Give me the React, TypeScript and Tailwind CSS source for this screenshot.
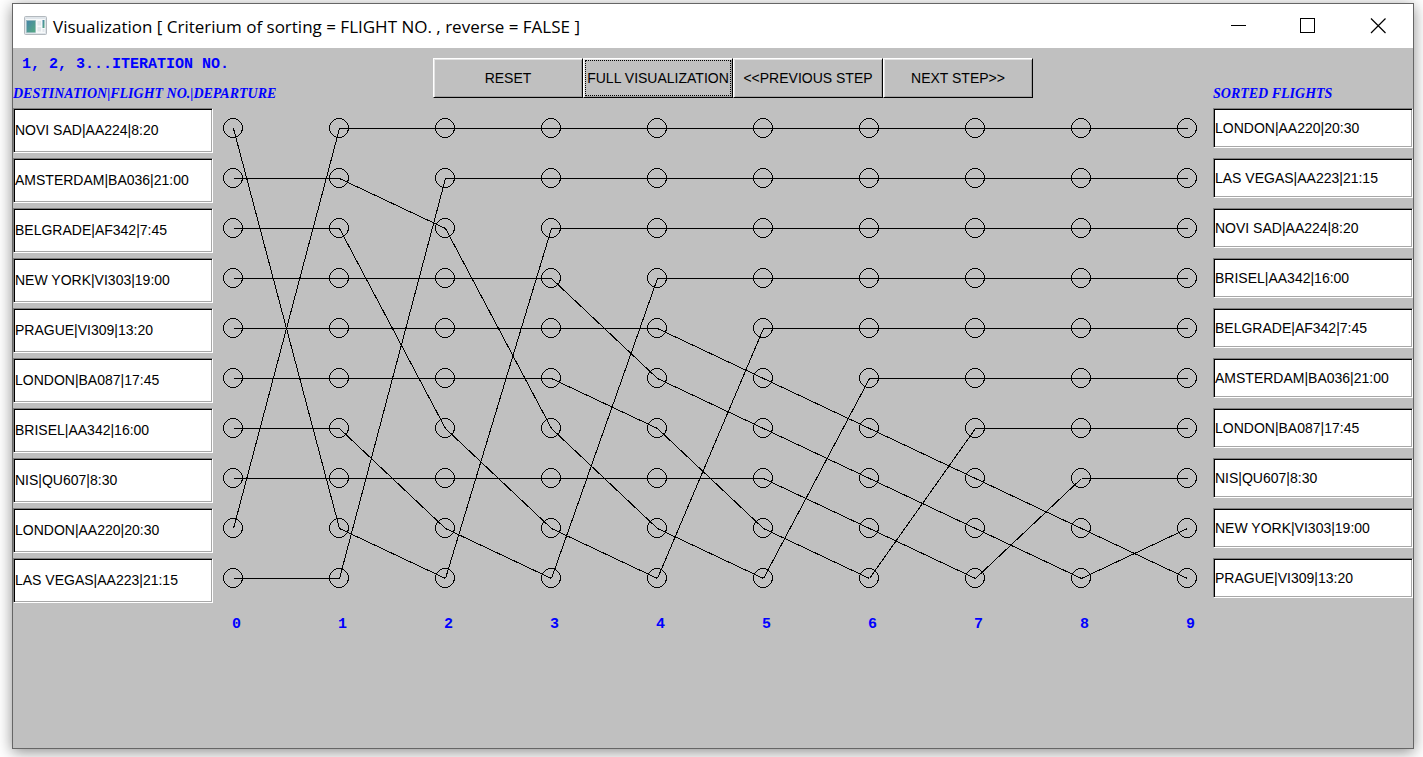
import React from "react";

const UNSORTED = [
  "NOVI SAD|AA224|8:20",
  "AMSTERDAM|BA036|21:00",
  "BELGRADE|AF342|7:45",
  "NEW YORK|VI303|19:00",
  "PRAGUE|VI309|13:20",
  "LONDON|BA087|17:45",
  "BRISEL|AA342|16:00",
  "NIS|QU607|8:30",
  "LONDON|AA220|20:30",
  "LAS VEGAS|AA223|21:15",
];

const SORTED = [
  "LONDON|AA220|20:30",
  "LAS VEGAS|AA223|21:15",
  "NOVI SAD|AA224|8:20",
  "BRISEL|AA342|16:00",
  "BELGRADE|AF342|7:45",
  "AMSTERDAM|BA036|21:00",
  "LONDON|BA087|17:45",
  "NIS|QU607|8:30",
  "NEW YORK|VI303|19:00",
  "PRAGUE|VI309|13:20",
];

// STEPS[i][row] is the row a flight moves to between iteration i and i + 1.
const STEPS = [
  [8, 1, 2, 3, 4, 5, 6, 7, 0, 9],
  [0, 2, 6, 3, 4, 5, 8, 7, 9, 1],
  [0, 1, 6, 3, 4, 5, 8, 7, 9, 2],
  [0, 1, 2, 5, 4, 6, 8, 7, 9, 3],
  [0, 1, 2, 3, 5, 6, 8, 7, 9, 4],
  [0, 1, 2, 3, 4, 6, 7, 8, 9, 5],
  [0, 1, 2, 3, 4, 5, 7, 8, 9, 6],
  [0, 1, 2, 3, 4, 5, 6, 8, 9, 7],
  [0, 1, 2, 3, 4, 5, 6, 7, 9, 8],
];

const INDEXES = Array.from({ length: 10 }, (_, i) => i);
const colX = (c: number) => 20 + 106 * c;
const rowY = (r: number) => 20 + 50 * r;

function AppIcon() {
  return (
    <svg className="h-5 w-6" viewBox="0 0 24 20" aria-hidden="true">
      <defs>
        <linearGradient id="pane" x1="0" y1="0" x2="1" y2="1">
          <stop offset="0" stopColor="#4583a8" />
          <stop offset="1" stopColor="#55ab80" />
        </linearGradient>
      </defs>
      <rect x="0.5" y="0.5" width="22" height="18" rx="1" fill="#dfe5ea" stroke="#b3b9be" />
      <rect x="2" y="3" width="19" height="14" fill="#f7f9fa" />
      <rect x="2.5" y="4.5" width="9" height="12" fill="url(#pane)" stroke="#8fb4b8" strokeWidth="0.6" />
      <path d="M13.5 5h3.5v4.5h-3.5zM13.5 11h3.5v4.5h-3.5z" fill="#e3e8ec" />
      <rect x="18.5" y="4" width="2" height="8" fill="url(#pane)" />
      <rect x="18.5" y="13" width="2" height="3" fill="#e3e8ec" />
    </svg>
  );
}

function TitleBar() {
  const control = "flex h-11 w-[70px] items-center justify-center";
  return (
    <header className="flex h-11 items-center bg-white pl-[11px]">
      <AppIcon />
      <h1 className="ml-[5px] flex-1 pt-[2px] font-['Open_Sans',sans-serif] text-[17px] leading-6 whitespace-nowrap text-black">
        Visualization [ Criterium of sorting = FLIGHT NO. , reverse = FALSE ]
      </h1>
      <button type="button" aria-label="Minimize" className={control}>
        <svg className="size-4" viewBox="0 0 16 16" stroke="#000" shapeRendering="crispEdges">
          <path d="M1 7.5H16" />
        </svg>
      </button>
      <button type="button" aria-label="Maximize" className={control}>
        <svg className="size-4" viewBox="0 0 16 16" stroke="#000" fill="none" shapeRendering="crispEdges">
          <rect x="0.5" y="0.5" width="14" height="14" />
        </svg>
      </button>
      <button type="button" aria-label="Close" className={control}>
        <svg className="size-4" viewBox="0 0 16 16" stroke="#000" strokeWidth="1.2">
          <path d="M1 0.5L15.5 15M15.5 0.5L1 15" />
        </svg>
      </button>
    </header>
  );
}

function StepButton({ children, focused }: { children: string; focused?: boolean }) {
  return (
    <button
      type="button"
      className="h-10 w-[150px] border border-t-white border-r-black border-b-black border-l-white whitespace-nowrap shadow-[inset_1px_1px_0_#e3e3e3,inset_-1px_-1px_0_#a0a0a0]"
    >
      <span
        className={
          focused
            ? "m-px flex h-9 items-center justify-center border border-dotted border-black"
            : "m-px flex h-9 items-center justify-center"
        }
      >
        {children}
      </span>
    </button>
  );
}

function FlightField({ label, value, size }: { label: string; value: string; size: string }) {
  return (
    <input
      readOnly
      aria-label={label}
      value={value}
      className={
        size +
        " block w-full border border-t-[#808080] border-r-white border-b-white border-l-[#808080] bg-white pl-px text-sm text-black shadow-[inset_1px_1px_0_#000,inset_-1px_-1px_0_#a8a8a8] outline-none"
      }
    />
  );
}

function SortChart() {
  return (
    <svg className="h-auto w-full" viewBox="0 0 1000 540" role="img" aria-label="Flight order by iteration">
      <g stroke="#000" fill="none" shapeRendering="crispEdges">
        {STEPS.map((step, c) =>
          step.map((to, from) => (
            <line
              key={c + "-" + from}
              x1={colX(c) + 0.5}
              y1={rowY(from) + 0.5}
              x2={colX(c + 1) + 0.5}
              y2={rowY(to) + 0.5}
            />
          )),
        )}
        {INDEXES.map((c) =>
          INDEXES.map((r) => <circle key={c + "-" + r} cx={colX(c)} cy={rowY(r)} r="9.5" />),
        )}
      </g>
      <g className="fill-[#0000ff] font-['Liberation_Mono',monospace] text-[15px] font-bold">
        {INDEXES.map((c) => (
          <text key={c} x={colX(c) - 1} y="520">
            {c}
          </text>
        ))}
      </g>
    </svg>
  );
}

export default function App() {
  const caption =
    "whitespace-nowrap font-['Liberation_Serif',serif] text-sm leading-[18px] font-bold italic text-[#0000ff]";
  return (
    <div className="flex min-h-screen bg-white pt-[3px] pr-[9px] pb-2 pl-3">
      <div className="flex flex-1 flex-col border border-[#666] bg-[#c0c0c0] font-['Liberation_Sans',sans-serif] text-sm text-black shadow-[0_3px_14px_rgba(0,0,0,0.45)]">
        <TitleBar />
        <main className="flex-1">
          <div className="flex h-[60px]">
            <div className="w-[420px] pt-2">
              <p className="pl-[9px] font-['Liberation_Mono',monospace] text-[15px] leading-[18px] font-bold whitespace-nowrap text-[#0000ff]">
                1, 2, 3...ITERATION NO.
              </p>
              <h2 className={"mt-[11px] " + caption}>DESTINATION|FLIGHT NO.|DEPARTURE</h2>
            </div>
            <div className="flex pt-[10px]">
              <StepButton>RESET</StepButton>
              <StepButton focused>FULL VISUALIZATION</StepButton>
              <StepButton>{"<<PREVIOUS STEP"}</StepButton>
              <StepButton>{"NEXT STEP>>"}</StepButton>
            </div>
            <div className="ml-auto w-[200px] pt-[37px]">
              <h2 className={caption}>SORTED FLIGHTS</h2>
            </div>
          </div>
          <div className="flex items-start">
            <div className="flex w-[200px] flex-col gap-[5px]">
              {UNSORTED.map((f, i) => (
                <FlightField key={f} label={"Flight " + (i + 1)} value={f} size="h-[45px] pb-[2px]" />
              ))}
            </div>
            <div className="min-w-0 flex-1">
              <SortChart />
            </div>
            <div className="flex w-[200px] flex-col gap-[10px]">
              {SORTED.map((f, i) => (
                <FlightField key={f} label={"Sorted flight " + (i + 1)} value={f} size="h-10" />
              ))}
            </div>
          </div>
        </main>
      </div>
    </div>
  );
}
